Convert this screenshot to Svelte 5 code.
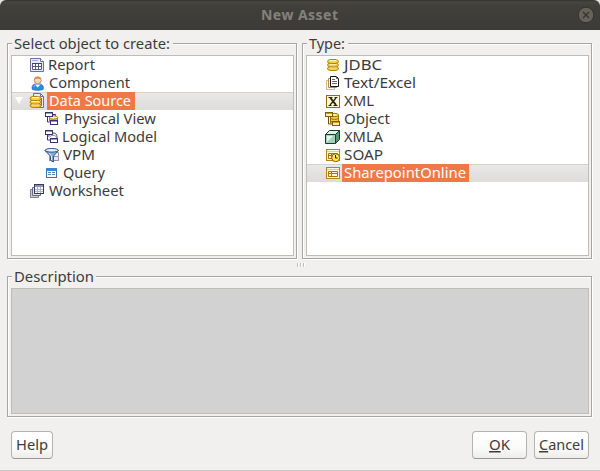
<script>
  const tree = [
    { icon: 'report', text: 'Report', w: 47, x: 19 },
    { icon: 'person', text: 'Component', w: 81, x: 20 },
    { icon: 'source', text: 'Data Source', w: 82, x: 20, selected: true },
    { icon: 'physical', text: 'Physical View', w: 92, x: 20, child: true },
    { icon: 'logical', text: 'Logical Model', w: 95, x: 18, child: true },
    { icon: 'vpm', text: 'VPM', w: 32, x: 19, child: true },
    { icon: 'query', text: 'Query', w: 42, x: 19, child: true },
    { icon: 'sheets', text: 'Worksheet', w: 75, x: 20 }
  ];
  const types = [
    { icon: 'jdbc', text: 'JDBC', w: 38 },
    { icon: 'pages', text: 'Text/Excel', w: 72 },
    { icon: 'xml', text: 'XML', w: 30 },
    { icon: 'object', text: 'Object', w: 46 },
    { icon: 'cube', text: 'XMLA', w: 39 },
    { icon: 'soap', text: 'SOAP', w: 39 },
    { icon: 'sharepoint', text: 'SharepointOnline', w: 122 }
  ];
</script>

{#snippet label(text, w, key = '')}
  <svg class="label" width={w} height="18"><text x="0" y="14" textLength={w} lengthAdjust="spacingAndGlyphs">{#if key}<tspan class="key">{key}</tspan>{/if}{text}</text></svg>
{/snippet}

{#snippet coins()}
  {#each [9.5, 6, 2.5] as y}
    <rect x="1.5" {y} width="11" height="4" rx="3.5" ry="2" fill="#f3cd45" stroke="#a97a0c" stroke-width=".9" />
    <path d="M3.5 {y + 1.2}h7" stroke="#fff6b0" stroke-width="1.2" />
  {/each}
{/snippet}

{#snippet win(x, y, fill, stroke)}
  <rect x={x + 0.5} y={y + 0.5} width="7" height="4" {fill} {stroke} />
  <path d="M{x} {y + 1}h8" {stroke} />
{/snippet}

{#snippet icon(name)}
  <svg class="icon" width="16" height="16" viewBox="0 0 16 16" fill="none">
    {#if name === 'report'}
      <path d="M1.5 1.5h10l3 3v10h-13z" fill="#e8ebf8" stroke="#6b6f9e" />
      <path d="M11.5 1.5v3h3" fill="#fff" stroke="#6b6f9e" />
      <path d="M3 3.5h6" stroke="#a5abd0" />
      <path d="M3.5 6.5h9v6h-9z M3.5 9.5h9M6.5 7v6M9.5 7v6" fill="#fff" stroke="#565a91" />
      <path d="M3 6.5h10" stroke="#3e426f" />
    {:else if name === 'person'}
      <path d="M3.4 14.5c-1-3 .4-5.3 3.2-5.6h4c3 .3 4.4 2.6 3.6 5.6-2.6 1-8.2 1-10.8 0z" fill="#2f8be0" stroke="#1760b2" stroke-width=".7" />
      <path d="M6 9.5l2.7 3 2.7-3z" fill="#fff" />
      <circle cx="8.7" cy="5.2" r="3.5" fill="#fbd9a8" stroke="#bd7d42" stroke-width=".8" />
      <path d="M5.5 4.6c.4-3.6 6-3.6 6.4 0-2-1.2-4.2-1-6.4 0z" fill="#cf9256" />
      <path d="M4.5 12c.3-1 .8-1.5 1.8-1.7" stroke="#79c2ff" />
    {:else if name === 'source'}
      <path d="M4.5.5h7l3 3v11h-10z" fill="#e6e9f8" stroke="#6a6ea0" />
      <path d="M11.5.5v3h3M12.5 5v8" stroke="#6a6ea0" />
      <g transform="translate(-.5 1)">{@render coins()}</g>
    {:else if name === 'jdbc'}
      <g transform="translate(1 0)">{@render coins()}</g>
    {:else if name === 'physical'}
      <path d="M3.5 6v5h2M9 3.5h2.5v2" stroke="#34366b" />
      <path d="M5.5 6.5v4c1 2 7 2 8 0v-4z" fill="#f0cd50" stroke="#b27a00" />
      <ellipse cx="9.5" cy="6.5" rx="4" ry="1.8" fill="#fff09a" stroke="#b27a00" />
      {@render win(1, 1, '#fff', '#34366b')}
      {@render win(6, 9, '#fff', '#34366b')}
    {:else if name === 'logical'}
      {@render win(1, 1, '#fff', '#34366b')}
      <path d="M3.5 6v5h3M3.5 8l2-2M9 4c4 0 4 3 4 5" stroke="#34366b" />
      <path d="M5.5 8.5c1-3 6-3 7 0" stroke="#8388b1" />
      {@render win(6, 9, '#fff', '#34366b')}
    {:else if name === 'vpm'}
      <rect x="5.5" y="9.5" width="9" height="4" fill="#e8e5f0" stroke="#9b93ae" />
      <path d="M11 5.5h3.5v4" stroke="#9b93ae" />
      <path d="M1 3.5l5.4 5.7v4l3 1.8V9.2L14.5 3.5z" fill="#80afe0" stroke="#304e83" />
      <ellipse cx="7.7" cy="3.3" rx="6.6" ry="1.8" fill="#e6f5ff" stroke="#304e83" />
      <path d="M5 6l2.5 3v4" stroke="#d7edff" />
    {:else if name === 'query'}
      <rect x="2.5" y="3.5" width="10" height="9" fill="#f4f9ff" stroke="#3a72b8" />
      <path d="M2 4.5h11" stroke="#3a83d5" stroke-width="3" />
      <path d="M4 7.5h3m1 0h3M4 9.5h3m1 0h3" stroke="#5583b5" />
    {:else if name === 'sheets'}
      <path d="M1.5 6.5h8v8h-8z" fill="#c8cce2" stroke="#7b7fa6" />
      <path d="M3.5 4.5h8v8h-8z" fill="#dfe2f0" stroke="#656992" />
      <rect x="5.5" y="1.5" width="9" height="9" fill="#fff" stroke="#363a5e" />
      <path d="M6 3h8" stroke="#8e93b5" stroke-width="2" />
      <path d="M6 6.5h8M6 8.5h8M8.5 4v6M11.5 4v6" stroke="#adb2ca" />
    {:else if name === 'pages'}
      <path d="M1.5 5.5h8v9h-8z" fill="#fff8e8" stroke="#d5b68a" />
      <path d="M3.5 3.5h8v9h-8z" fill="#fff8e8" stroke="#b98a50" />
      <path d="M5.5 1.5h6l2 2v8h-8z" fill="#fff" stroke="#17130d" />
      <path d="M11.5 1.5v2h2M7 4.5h3M7 6.5h5M7 8.5h5" stroke="#6b6560" />
    {:else if name === 'xml'}
      <rect x="1.5" y="2.5" width="13" height="12" fill="#fffbdc" stroke="#966d0b" />
      <path d="M5.5 5l5.5 7" stroke="#26240f" stroke-width="2" />
      <path d="M11 5l-6 7" stroke="#26240f" stroke-width="1.2" />
      <path d="M3.5 4.5h4M9.5 4.5h3M3.5 12.5h3M8.5 12.5h4" stroke="#26240f" />
    {:else if name === 'object'}
      <path d="M3.5 6v7h3" stroke="#744a00" />
      <path d="M5.5 4v8c1 2 7 2 8 0V4z" fill="#f0c948" stroke="#9c6b00" />
      <path d="M5.5 7c1 2 7 2 8 0M5.5 10c1 2 7 2 8 0" stroke="#a66e00" />
      <ellipse cx="9.5" cy="4" rx="4" ry="1.6" fill="#fff09a" stroke="#9c6b00" />
      {@render win(0, 1, '#fff2a4', '#855500')}
      {@render win(7, 10, '#fff2a4', '#855500')}
    {:else if name === 'cube'}
      <path d="M.5 5.5l4-4h10v9l-4 4H.5z" fill="#5c9275" />
      <path d="M.5 5.5l4-4h10l-4 4z" fill="#d9f2e3" />
      <rect x=".5" y="5.5" width="10" height="9" fill="#a4cfb8" />
      <path d="M2 13V7h6z" fill="#e3f8ec" />
      <path d="M.5 5.5l4-4h10v9l-4 4H.5zM.5 5.5h10v9M10.5 5.5l4-4" stroke="#163d2c" />
    {:else}
      <rect x="1.5" y="2.5" width="13" height="11" fill="#fff9d8" stroke="#b18420" />
      <path d="M2 4.5h12" stroke="#f1cf68" />
      <path d="M3.5 6.5h9v5h-9zM3 8.5h10M6.5 7v5" stroke="#a97508" />
      {#if name === 'soap'}
        <circle cx="10.7" cy="10.7" r="4" fill="#ffe95c" stroke="#806000" />
        <path d="M10.5 8v3h2" stroke="#292500" />
      {/if}
    {/if}
  </svg>
{/snippet}

{#snippet row(item, offset)}
  <div class="row" class:selected={item.selected || item.icon === 'sharepoint'} class:child={item.child}>
    {#if item.icon === 'source'}
      <svg class="twisty" width="9" height="8"><path d="M0 1h8L4 8z" fill="#fff" /></svg>
    {/if}
    {@render icon(item.icon)}
    <span class="name" style:margin-left="{offset - 18}px">{@render label(item.text, item.w)}</span>
  </div>
{/snippet}

<main>
  <header>
    <svg class="title" width="78" height="20"><text x="0" y="15" textLength="77">New Asset</text></svg>
    <svg class="close" width="18" height="18"><circle cx="9" cy="9" r="7.8" fill="#65625b" stroke="#33322e" /><path d="M6 6l6 6M12 6l-6 6" stroke="#34332f" stroke-width="1.3" /></svg>
  </header>
  <div class="panes">
    <section class="group left">
      <div class="legend">{@render label('Select object to create:', 156)}</div>
      <div class="list">{#each tree as item}{@render row(item, item.x)}{/each}</div>
    </section>
    <section class="group right">
      <div class="legend">{@render label('Type:', 36)}</div>
      <div class="list">{#each types as item}{@render row(item, 19)}{/each}</div>
    </section>
  </div>
  <div class="splitter"><i></i><i></i><i></i></div>
  <section class="group description">
    <div class="legend">{@render label('Description', 80)}</div>
    <div class="list disabled"></div>
  </section>
  <footer>
    <button class="help">{@render label('Help', 32)}</button>
    <button class="ok">{@render label('K', 21, 'O')}</button>
    <button class="cancel">{@render label('ancel', 45, 'C')}</button>
  </footer>
  <div class="edge"></div>
</main>

<style>
  :global(body) { margin: 0; background: #e4e2df; }
  * { box-sizing: border-box; }
  main {
    width: 600px;
    height: 471px;
    display: flex;
    flex-direction: column;
    overflow: hidden;
    background: #f1f0ee;
    border-radius: 6px 6px 0 0;
    font: 15px "Noto Sans", sans-serif;
  }
  header {
    height: 30px;
    flex: none;
    display: flex;
    align-items: center;
    padding: 0 5px 0 261px;
    background: linear-gradient(#33322e 0, #474641 2px, #403f3a 6px, #3c3b37);
  }
  .title { font: bold 14px "Noto Sans", sans-serif; fill: #85827a; }
  .close { margin-left: auto; }
  .label { display: block; flex: none; overflow: visible; fill: #3c3c3c; }
  .key { text-decoration: underline; }
  .panes { display: flex; gap: 5px; padding: 13px 8px 0 7px; }
  .group {
    position: relative;
    border: 1px solid #a6a5a1;
    box-shadow: 1px 1px #fff, inset 1px 1px #fff;
    padding: 11px 2px 2px 3px;
  }
  .left, .right { height: 216px; width: 290px; }
  .description { height: 141px; margin: 0 8px 0 7px; }
  .legend {
    position: absolute;
    top: -9px;
    left: 4px;
    padding: 0 2px;
    background: #f1f0ee;
  }
  .left .legend, .right .legend { padding-right: 3px; }
  .list {
    height: 100%;
    background: #fff;
    border: 1px solid #bebdb7;
  }
  .disabled { background: #d2d2d2; }
  .row {
    height: 18px;
    display: flex;
    align-items: center;
    position: relative;
    padding-left: 17px;
  }
  .child { padding-left: 32px; }
  .right .row { padding-left: 18px; }
  .icon { flex: none; }
  .selected { background: linear-gradient(#d3d2cf 0, #d3d2cf 1px, #e9e8e6 1px, #dddcd9); }
  .name { padding: 0 4px 0 2px; }
  .selected .name { background: #f07746; }
  .selected .name :global(.label) { fill: #fff; }
  .right .name { padding: 0 3px 0 2px; }
  .twisty { position: absolute; left: 3px; top: 4px; }
  .splitter { height: 17px; flex: none; display: flex; justify-content: center; gap: 2px; padding-top: 4px; }
  .splitter i { width: 1px; height: 4px; background: #c2c1bd; box-shadow: 1px 0 #fff; }
  footer { display: flex; padding: 14px 11px 0 11px; }
  button {
    height: 28px;
    padding: 0 0 0 4px;
    border: 1px solid #b4b3ae;
    border-bottom-color: #999892;
    border-radius: 4px;
    background: linear-gradient(#fff, #fbfbfa 60%, #ededeb);
    font: inherit;
  }
  .help { width: 42px; }
  .ok { width: 55px; margin-left: auto; padding-left: 16px; }
  .cancel { width: 55px; margin-left: 7px; }
  .edge { height: 1px; margin-top: auto; background: #c8c7c4; }
</style>
